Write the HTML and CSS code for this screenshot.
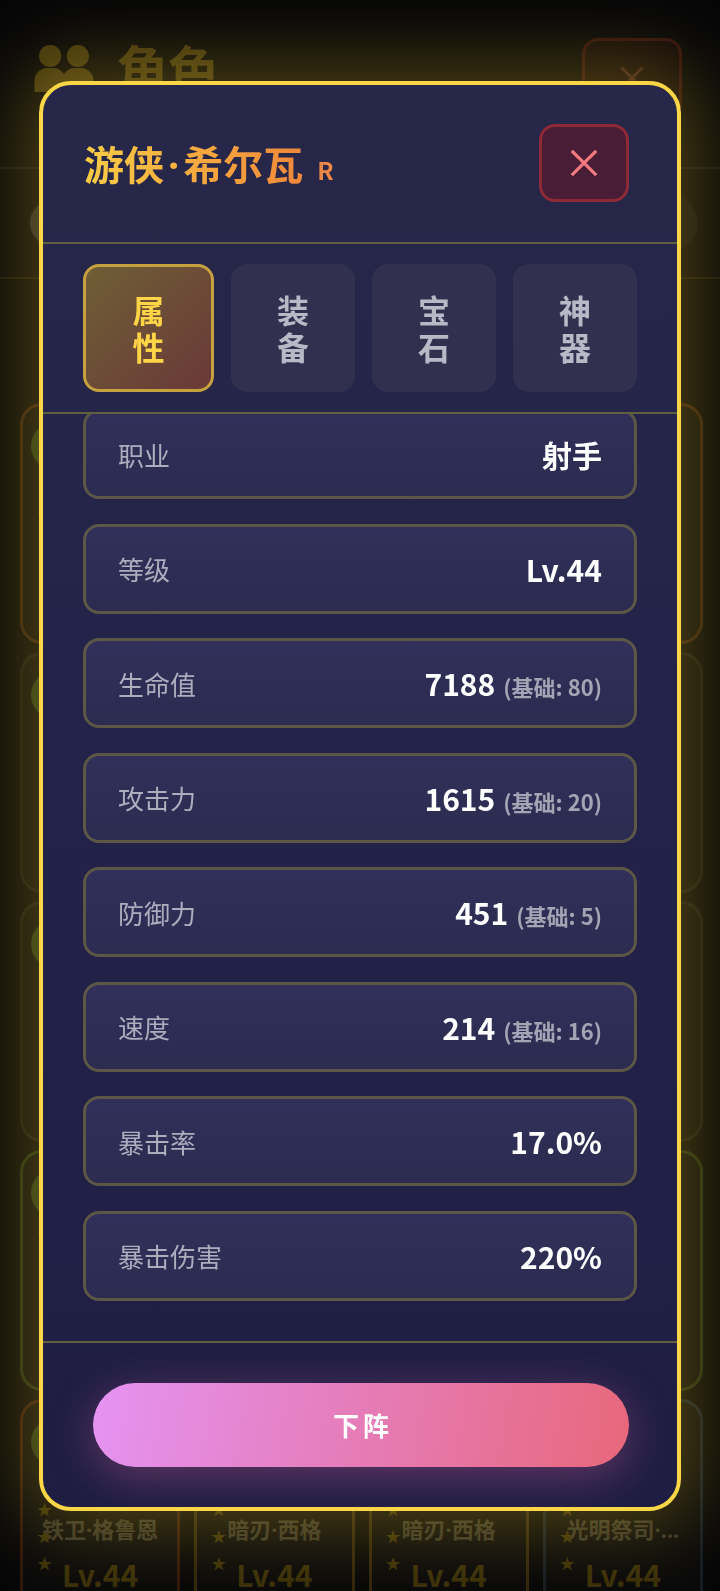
FILE: index.html
```html
<!DOCTYPE html>
<html lang="zh-CN">
<head>
  <meta charset="UTF-8">
  <meta name="viewport" content="width=device-width, initial-scale=1.0">
  <title>角色 - 游侠·希尔瓦</title>
  <link rel="stylesheet" href="styles.css">
</head>
<body>

  <!-- roster page behind the dialog -->
  <div class="page">
    <header class="page-head">
      <h1 class="page-title">
        <svg class="page-icon" viewBox="0 0 64 52" aria-hidden="true">
          <circle cx="17" cy="13" r="12"/>
          <circle cx="47" cy="13" r="12"/>
          <path d="M0 52 V40 a14 14 0 0 1 14-14 h6 a14 14 0 0 1 14 14 V52 Z"/>
          <path d="M30 52 V40 a14 14 0 0 1 14-14 h6 a14 14 0 0 1 14 14 V52 Z"/>
        </svg>
        角色
      </h1>
      <button class="page-close" aria-label="关闭">
        <svg viewBox="0 0 32 32" aria-hidden="true"><path d="M4 4 L28 28 M28 4 L4 28"/></svg>
      </button>
    </header>

    <div class="team-bar">
      <div class="team-slot"><span class="team-avatar"></span></div>
    </div>

    <div class="roster">
      <div class="card card-orange"><span class="card-avatar"></span><div class="card-stars">★<br>★</div></div>
      <div class="card card-gold"><span class="card-avatar"></span></div>
      <div class="card card-gold"><span class="card-avatar"></span></div>
      <div class="card card-orange"><span class="card-avatar"></span></div>

      <div class="card card-dim"><span class="card-avatar"></span></div>
      <div class="card card-dim"><span class="card-avatar"></span></div>
      <div class="card card-dim"><span class="card-avatar"></span></div>
      <div class="card card-dim"><span class="card-avatar"></span></div>

      <div class="card card-dim"><span class="card-avatar"></span></div>
      <div class="card card-dim"><span class="card-avatar"></span></div>
      <div class="card card-dim"><span class="card-avatar"></span></div>
      <div class="card card-dim"><span class="card-avatar"></span></div>

      <div class="card card-green"><span class="card-avatar"></span><div class="card-stars">★<br>★<br>★<br>★<br>★</div></div>
      <div class="card card-green"><span class="card-avatar"></span></div>
      <div class="card card-green"><span class="card-avatar"></span></div>
      <div class="card card-green"><span class="card-avatar"></span></div>

      <div class="card card-red"><span class="card-avatar"></span><div class="card-stars">★<br>★<br>★<br>★</div><div class="card-name">铁卫<span class="dot">·</span>格鲁恩</div><div class="card-level">Lv.44</div></div>
      <div class="card card-gold"><span class="card-avatar"></span><div class="card-stars">★<br>★<br>★<br>★</div><div class="card-name">暗刃<span class="dot">·</span>西格</div><div class="card-level">Lv.44</div></div>
      <div class="card card-gold"><span class="card-avatar"></span><div class="card-stars">★<br>★<br>★<br>★</div><div class="card-name">暗刃<span class="dot">·</span>西格</div><div class="card-level">Lv.44</div></div>
      <div class="card card-blue"><span class="card-avatar"></span><div class="card-stars">★<br>★<br>★<br>★</div><div class="card-name">光明祭司<span class="dot">·...</span></div><div class="card-level">Lv.44</div></div>
    </div>
  </div>

  <!-- hero detail dialog -->
  <div class="overlay">
    <div class="modal">
      <header class="modal-head">
        <h2 class="hero-name"><span class="hero-name-text">游侠<span class="dot">·</span>希尔瓦</span><span class="hero-rarity">R</span></h2>
        <button class="modal-close" aria-label="关闭">
          <svg viewBox="0 0 32 32" aria-hidden="true"><path d="M3 3 L29 29 M29 3 L3 29"/></svg>
        </button>
      </header>

      <nav class="tabs">
        <button class="tab tab-active"><span>属</span><span>性</span></button>
        <button class="tab"><span>装</span><span>备</span></button>
        <button class="tab"><span>宝</span><span>石</span></button>
        <button class="tab"><span>神</span><span>器</span></button>
      </nav>

      <section class="stats">
        <div class="stat-list">
          <div class="stat-row"><span class="stat-label">职业</span><span class="stat-value">射手</span></div>
          <div class="stat-row"><span class="stat-label">等级</span><span class="stat-value">Lv.44</span></div>
          <div class="stat-row"><span class="stat-label">生命值</span><span class="stat-value">7188<small class="stat-base">(基础: 80)</small></span></div>
          <div class="stat-row"><span class="stat-label">攻击力</span><span class="stat-value">1615<small class="stat-base">(基础: 20)</small></span></div>
          <div class="stat-row"><span class="stat-label">防御力</span><span class="stat-value">451<small class="stat-base">(基础: 5)</small></span></div>
          <div class="stat-row"><span class="stat-label">速度</span><span class="stat-value">214<small class="stat-base">(基础: 16)</small></span></div>
          <div class="stat-row"><span class="stat-label">暴击率</span><span class="stat-value">17.0%</span></div>
          <div class="stat-row"><span class="stat-label">暴击伤害</span><span class="stat-value">220%</span></div>
        </div>
      </section>

      <footer class="modal-foot">
        <button class="btn-remove">下阵</button>
      </footer>
    </div>
  </div>

</body>
</html>
```

FILE: styles.css
```css
* {
  box-sizing: border-box;
}

body {
  margin: 0;
  width: 720px;
  height: 1591px;
  overflow: hidden;
  background: #16161c;
  font-family: "Noto Sans CJK SC", "Noto Sans", sans-serif;
}

button {
  font-family: inherit;
  border: none;
  padding: 0;
  cursor: pointer;
}

/* the chinese font draws the middle dot full width */
.dot {
  font-family: "Noto Sans", sans-serif;
}

/* ---------- roster page (behind) ---------- */
.page-head {
  height: 167px;
  display: flex;
  justify-content: space-between;
  align-items: flex-start;
  padding: 38px 38px 0 34px;
}

.page-title {
  margin: 4px 0 0;
  display: flex;
  align-items: center;
  gap: 22px;
  font-size: 52px;
  line-height: 1;
  font-weight: 700;
  color: #f3c431;
}

.page-icon {
  width: 60px;
  height: 48px;
  fill: #f3c431;
}

.page-close {
  width: 100px;
  height: 80px;
  border: 3px solid #b83a2c;
  border-radius: 16px;
  background: rgba(184, 58, 44, 0.25);
  display: flex;
  align-items: center;
  justify-content: center;
}

.page-close svg {
  width: 28px;
  height: 28px;
  stroke: #e5735f;
  stroke-width: 3;
}

.team-bar {
  height: 112px;
  border-top: 2px solid rgba(255, 214, 64, 0.25);
  border-bottom: 2px solid rgba(255, 214, 64, 0.25);
  display: flex;
  align-items: center;
  padding: 0 22px 0 30px;
}

.team-slot {
  flex: 1;
  height: 56px;
  border-radius: 28px;
  background: rgba(255, 255, 255, 0.1);
  display: flex;
  align-items: center;
}

.team-avatar {
  width: 44px;
  height: 44px;
  border-radius: 50%;
  background: #8a8a8a;
}

.roster {
  padding: 124px 17px 0 20px;
  display: grid;
  grid-template-columns: repeat(4, 1fr);
  grid-auto-rows: 241px;
  gap: 8px 14px;
}

.card {
  position: relative;
  border: 3px solid #555;
  border-radius: 22px;
  background: rgba(255, 255, 255, 0.05);
  padding: 16px 8px 0 8px;
  display: flex;
  flex-direction: column;
  overflow: hidden;
}

.card-orange { border-color: #b8642a; }
.card-red { border-color: #b5532c; }
.card-gold { border-color: #b88a2a; }
.card-green { border-color: #6b9a3a; }
.card-blue { border-color: #4a6a8a; }
.card-dim { border-color: #4a4a40; }

.card-avatar {
  width: 48px;
  height: 48px;
  border-radius: 50%;
  background: #7fb64a;
}

.card-stars {
  position: absolute;
  left: 14px;
  top: 66px;
  font-size: 15px;
  line-height: 27px;
  color: #e0b420;
}

.card-name {
  margin-top: 47px;
  font-size: 22px;
  line-height: 30px;
  font-weight: 700;
  color: #cfc290;
  text-align: center;
  white-space: nowrap;
}

.card-level {
  margin-top: 15px;
  font-size: 30px;
  font-weight: 700;
  line-height: 30px;
  color: #d9b222;
  text-align: center;
}

/* ---------- dialog ---------- */
.overlay {
  position: fixed;
  inset: 0;
  background: rgba(0, 0, 0, 0.74);
  display: flex;
  align-items: center;
  justify-content: center;
}

.modal {
  width: 642px;
  height: 1430px;
  border: 4px solid #fbd748;
  border-radius: 32px;
  background: linear-gradient(180deg, #272749 0%, #23234a 50%, #1f1d42 100%);
  box-shadow: 0 0 80px 16px rgba(255, 214, 60, 0.3);
  display: flex;
  flex-direction: column;
  overflow: hidden;
}

.modal-head {
  height: 159px;
  flex-shrink: 0;
  display: flex;
  align-items: center;
  justify-content: space-between;
  padding: 0 48px 0 41px;
  border-bottom: 2px solid #625e41;
}

.hero-name {
  margin: 0;
  display: flex;
  align-items: baseline;
  font-weight: 700;
}

.hero-name-text {
  font-size: 40px;
  background: linear-gradient(90deg, #f9cd45 0%, #f39c3d 70%, #ee883a 100%);
  -webkit-background-clip: text;
  background-clip: text;
  color: transparent;
}

.hero-name-text .dot {
  margin: 0 4px;
}

.hero-rarity {
  margin-left: 14px;
  font-size: 24px;
  color: #ec8745;
}

.modal-close {
  width: 90px;
  height: 78px;
  border: 3px solid #8e2a37;
  border-radius: 16px;
  background: #4a1d37;
  display: flex;
  align-items: center;
  justify-content: center;
}

.modal-close svg {
  width: 30px;
  height: 30px;
  stroke: #f07a80;
  stroke-width: 3.4;
}

.tabs {
  flex-shrink: 0;
  display: grid;
  grid-template-columns: 131px repeat(3, 1fr);
  gap: 17px;
  padding: 20px 40px;
  border-bottom: 2px solid #625e41;
}

.tab {
  height: 128px;
  border-radius: 16px;
  background: #31314f;
  color: #b8b8c6;
  font-size: 32px;
  font-weight: 700;
  line-height: 37px;
  display: flex;
  flex-direction: column;
  align-items: center;
  justify-content: center;
}

.tab-active {
  border: 3px solid #c6a23f;
  background: linear-gradient(135deg, #6f5e35 0%, #6c4a37 55%, #6a3838 100%);
  color: #ffd548;
}

.stats {
  flex: 1;
  min-height: 0;
  overflow: hidden;
  display: flex;
  flex-direction: column;
  justify-content: flex-end;
  padding: 0 40px 40px;
}

.stat-list {
  display: flex;
  flex-direction: column;
  gap: 24.5px;
}

.stat-row {
  flex-shrink: 0;
  height: 90px;
  border: 3px solid #5c5746;
  border-radius: 16px;
  background: linear-gradient(180deg, #30305a 0%, #2c2b50 100%);
  display: flex;
  align-items: center;
  justify-content: space-between;
  padding: 0 32px;
}

.stat-label {
  font-size: 26px;
  color: #adadbd;
}

.stat-value {
  font-size: 30px;
  font-weight: 700;
  color: #ffffff;
}

.stat-base {
  margin-left: 8px;
  font-size: 22px;
  font-weight: 700;
  color: #a4a4b4;
}

.modal-foot {
  flex-shrink: 0;
  border-top: 2px solid #625e41;
  padding: 40px 48px 40px 50px;
}

.btn-remove {
  width: 100%;
  height: 84px;
  border-radius: 42px;
  background: linear-gradient(100deg, #e593f3 0%, #e57ebd 45%, #e8687b 100%);
  box-shadow: 0 10px 44px rgba(224, 104, 170, 0.35);
  color: #ffffff;
  font-size: 26px;
  font-weight: 700;
  letter-spacing: 4px;
  text-indent: 4px;
}
```
